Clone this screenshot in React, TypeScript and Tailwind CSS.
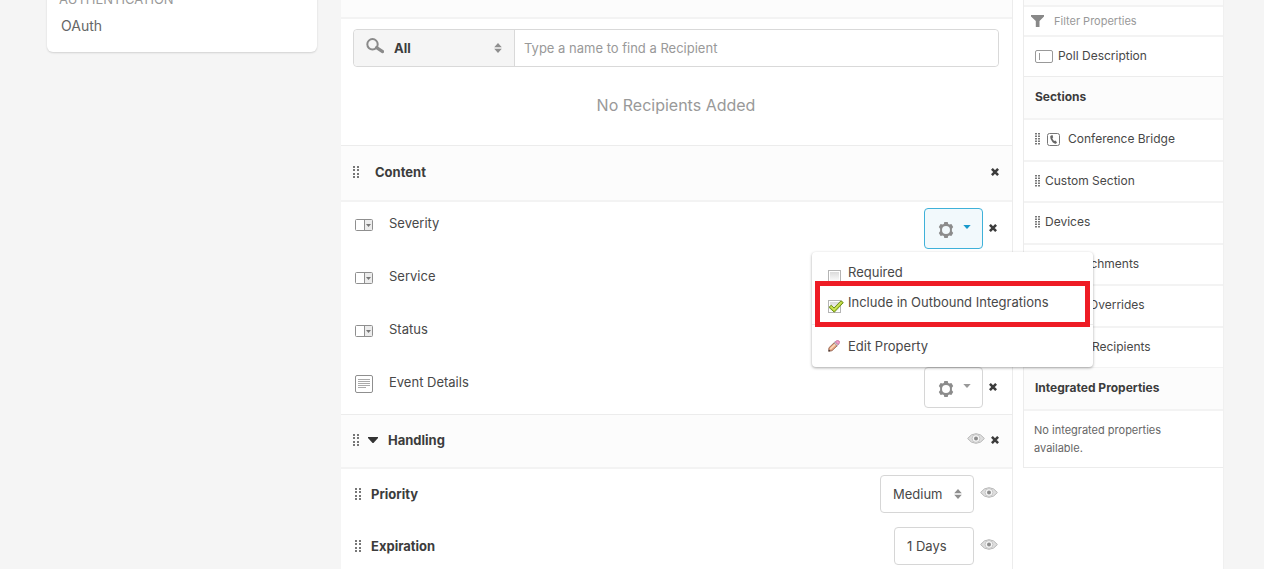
import { useState, type ReactNode } from "react";

function Grip() {
  return (
    <svg width="6" height="12" viewBox="0 0 6 12" className="shrink-0 fill-[#777]" aria-hidden="true">
      {[0, 4].map((x) =>
        [0, 3, 7, 10].map((y) => <rect key={`${x}-${y}`} x={x} y={y} width="2" height="2" />),
      )}
    </svg>
  );
}

function SmallGrip() {
  return (
    <svg width="5" height="12" viewBox="0 0 5 12" className="shrink-0 fill-[#777]" aria-hidden="true">
      {[0, 3].map((x) =>
        [0, 2.5, 5, 7.5, 10].map((y) => <rect key={`${x}-${y}`} x={x} y={y} width="2" height="1.5" />),
      )}
    </svg>
  );
}

function SearchIcon() {
  return (
    <svg width="18" height="16" viewBox="0 0 18 16" fill="none" stroke="#8a8a8a" aria-hidden="true">
      <circle cx="6.5" cy="6.3" r="5.2" strokeWidth="2" />
      <path d="M10.6 9.6 16.6 13.6" strokeWidth="3.2" strokeLinecap="round" />
    </svg>
  );
}

function Sorter({ className }: { className: string }) {
  return (
    <svg width="8" height="10" viewBox="0 0 8 10" className={`pointer-events-none absolute fill-[#8f8f8f] ${className}`} aria-hidden="true">
      <path d="M4 0 7.8 4.300H.2zM4 10 .2 5.700h7.600z" />
    </svg>
  );
}

function ListFieldIcon() {
  return (
    <svg width="18" height="12" viewBox="0 0 18 12" className="shrink-0" aria-hidden="true">
      <rect x=".5" y=".5" width="17" height="11" rx="1" fill="#fff" stroke="#8f8f8f" />
      <path d="M10 1h7v10h-7z" fill="#ececec" />
      <path d="M9.5 1v10" stroke="#8f8f8f" />
      <path d="M11 5h5l-2.5 3z" fill="#777" />
    </svg>
  );
}

function TextAreaIcon() {
  return (
    <svg width="18" height="18" viewBox="0 0 18 18" fill="none" stroke="#8f8f8f" className="shrink-0" aria-hidden="true">
      <rect x=".5" y=".5" width="17" height="17" rx="1.5" />
      <path d="M3 4.5h12M3 6.5h12M3 8.5h12M3 10.5h12M3 12.5h8" stroke="#aaa" />
    </svg>
  );
}

function TextFieldIcon() {
  return (
    <svg width="18" height="13" viewBox="0 0 18 13" fill="none" stroke="#999" className="shrink-0" aria-hidden="true">
      <rect x=".5" y=".5" width="17" height="12" rx="1.5" />
      <path d="M4.5 3v7" />
    </svg>
  );
}

function PhoneIcon() {
  return (
    <svg width="13" height="13" viewBox="0 0 13 13" className="shrink-0" aria-hidden="true">
      <rect x=".5" y=".5" width="12" height="12" rx="2" fill="#fff" stroke="#777" />
      <path d="M4 2.4 5.5 2 6.2 4.4 5.3 5.1Q5.8 6.9 7.2 8.1L8.3 7.5 10 9.2 9.2 10.6Q7.6 11.3 5.6 9.3 3 6.4 3.2 3.7 3.3 2.9 4 2.4z" fill="#666" />
    </svg>
  );
}

function ClipIcon() {
  return (
    <svg width="13" height="13" viewBox="0 0 13 13" fill="none" stroke="#777" className="shrink-0" aria-hidden="true">
      <path d="M9 4v5a2.5 2.5 0 0 1-5 0V3.5a1.5 1.5 0 0 1 3 0V9" />
    </svg>
  );
}

function FunnelIcon() {
  return (
    <svg width="13" height="12" viewBox="0 0 13 12" className="shrink-0 fill-[#888]" aria-hidden="true">
      <path d="M0 0h13v1.500L8.500 6v6H4.800V6L0 1.500z" />
    </svg>
  );
}

function GearIcon() {
  return (
    <svg width="16" height="16" viewBox="0 0 16 16" aria-hidden="true">
      <path
        fillRule="evenodd"
        fill="#8c8c8c"
        d="M6.300 0h3.400l.5 1.900 1.200.7 2-.5 1.800 2.900-1.300 1.700v2.600l1.300 1.700-1.800 2.900-2-.5-1.200.7-.5 1.900H6.300l-.5-1.900-1.200-.7-2 .5L.8 11l1.300-1.700V6.700L.8 5l1.800-2.900 2 .5 1.200-.7zM8 4a4 4 0 1 0 0 8 4 4 0 0 0 0-8z"
      />
    </svg>
  );
}

function CloseButton({ label }: { label: string }) {
  return (
    <button type="button" aria-label={label} className="block h-2 w-2 shrink-0 cursor-pointer">
      <svg width="8" height="8" viewBox="0 0 8 8" fill="none" stroke="#3c3c3c" strokeWidth="2.600" aria-hidden="true">
        <path d="M.9.9 7.100 7.100M7.100.9.9 7.100" />
      </svg>
    </button>
  );
}

function EyeButton({ label }: { label: string }) {
  return (
    <button type="button" aria-label={label} className="mb-1 block shrink-0 cursor-pointer">
      <svg width="18" height="11" viewBox="0 0 18 11" aria-hidden="true">
        <path d="M.6 5.500Q4 .7 9 .7t8.400 4.800Q14 10.300 9 10.300T.6 5.500z" fill="#dedede" stroke="#b8b8b8" />
        <circle cx="9" cy="5.500" r="3.900" fill="#f6f6f6" stroke="#bdbdbd" strokeWidth=".8" />
        <circle cx="9" cy="5.500" r="2" fill="#8c8c8c" />
      </svg>
    </button>
  );
}

function PencilIcon() {
  return (
    <svg width="12" height="12" viewBox="0 0 13 13" aria-hidden="true">
      <path d="M1 8.400 6.600 3 10 6.200 4.300 11.600.8 12.200z" fill="#eba882" stroke="#8a5a48" strokeWidth=".9" />
      <path d="M2.500 9.800 8 4.600" stroke="#fbdcc0" strokeWidth="1.300" />
      <path d="M6.600 3 7.800 1.900 11 5.100 10 6.200z" fill="#d8d8de" stroke="#8d8d98" strokeWidth=".6" />
      <path d="M7.800 1.900Q9.800-.4 11.900 1T11 5.100z" fill="#f29cc8" stroke="#b86890" strokeWidth=".8" />
      <path d="M.5 12.500.9 10.400 2.600 12z" fill="#333" />
    </svg>
  );
}

function CheckMark() {
  return (
    <svg width="16" height="13" viewBox="0 0 16 13" className="pointer-events-none absolute top-0 left-0" aria-hidden="true">
      <path d="M1 7.300 3.300 5.200 6 8 13 .8 15.300 2.600 6.300 12.200z" fill="#b5d334" stroke="#6f8f1c" strokeWidth="1" strokeLinejoin="round" />
      <path d="M3.200 6.700 6.100 9.700 13.200 2.300" fill="none" stroke="#dcec82" strokeWidth=".9" />
    </svg>
  );
}

function Option({ label, initial = false }: { label: string; initial?: boolean }) {
  const [on, setOn] = useState(initial);
  return (
    <label className="flex h-[30px] items-center gap-1 pl-4">
      <span className="relative mt-2 block h-[13px] w-4">
        <input
          type="checkbox"
          checked={on}
          onChange={() => setOn(!on)}
          className="block h-[13px] w-[13px] appearance-none border border-[#b4b4b4] bg-linear-to-b from-[#d8d8d8] to-white shadow-[inset_0_0_0_1px_#fff]"
        />
        {on && <CheckMark />}
      </span>
      {label}
    </label>
  );
}

function GearButton({ label, active = false }: { label: string; active?: boolean }) {
  return (
    <button
      type="button"
      aria-label={label}
      aria-expanded={active}
      className={
        active
          ? "flex h-[41px] w-[59px] items-center gap-[9px] rounded border border-[#3fb1d9] bg-[#f2f9fc] pt-[2px] pl-[13px] text-[#1899cb]"
          : "flex h-[41px] w-[59px] items-center gap-[9px] rounded border border-[#d6d6d6] bg-white pt-[2px] pl-[13px] text-[#999]"
      }
    >
      <GearIcon />
      <svg width="8" height="4" viewBox="0 0 8 4" className="-mt-[6px]" fill="currentColor" aria-hidden="true">
        <path d="M.3 0h7.400L4 4z" />
      </svg>
    </button>
  );
}

function PropertyRow({ name, icon, children }: { name: string; icon: ReactNode; children?: ReactNode }) {
  return (
    <div className="flex h-[53px] items-center justify-between pr-[15px] pl-[14px]">
      <div className="flex items-center gap-4 pb-2">
        <span className="block">{icon}</span>
        <span className="-mt-1">{name}</span>
      </div>
      {children}
    </div>
  );
}

function AsideItem({ name, icon }: { name: string; icon?: ReactNode }) {
  return (
    <li className="flex flex-1 items-center border-b-2 border-[#f3f3f3] pb-px pl-[11px] last:border-b">
      <SmallGrip />
      {icon ? <span className="mr-2 ml-[7px]">{icon}</span> : <span className="w-[5px]" />}
      {name}
    </li>
  );
}

const bar = "flex items-center justify-between bg-[#fcfcfc] border-[#f3f3f3] border-b-2";

export default function App() {
  return (
    <div className="flex h-screen items-stretch overflow-hidden bg-[#f5f5f5] pr-10 pl-[47px] font-[Inter,sans-serif] text-[13px] leading-5 text-[#484848]">
      <nav className="mr-6 w-[270px] shrink-0">
        <div className="rounded-b-md bg-white px-3 pb-4 shadow-[0_1px_2px_rgba(0,0,0,0.15)]">
          <h2 className="-mt-[11px] text-[13px] text-[#999]">AUTHENTICATION</h2>
          <a href="#oauth" className="mt-[7px] block pl-[2px] text-[14px] leading-5 text-[#666]">
            OAuth
          </a>
        </div>
      </nav>

      <main className="flex min-w-0 flex-1 bg-white">
        <div className="min-w-0 flex-1 border-r border-[#ececec]">
          <div className={`${bar} h-[19px]`} />

          <section className="h-[126px] pt-[10px] pr-[13px] pl-3">
            <div className="flex h-[38px] rounded border border-[#d9d9d9]">
              <div className="relative flex w-[161px] items-center rounded-l border-r border-[#d9d9d9] bg-[#f5f5f5]">
                <span className="pointer-events-none absolute left-3 -mt-1">
                  <SearchIcon />
                </span>
                <select aria-label="Recipient type" className="h-full w-full appearance-none pl-10 font-bold text-[#3c3c3c] outline-none">
                  <option>All</option>
                </select>
                <Sorter className="right-3" />
              </div>
              <input
                type="text"
                aria-label="Recipient name"
                placeholder="Type a name to find a Recipient"
                className="min-w-0 flex-1 rounded-r bg-white px-[9px] outline-none placeholder:text-[#999]"
              />
            </div>
            <p className="mt-7 text-center text-base leading-5 text-[#999]">No Recipients Added</p>
          </section>

          <section>
            <header className={`${bar} h-[57px] border-t border-t-[#ececec] pr-[13px] pb-[2px] pl-3`}>
              <div className="flex items-center gap-4">
                <Grip />
                <h3 className="font-bold text-[#3c3c3c]">Content</h3>
              </div>
              <CloseButton label="Remove Content" />
            </header>
            <PropertyRow name="Severity" icon={<ListFieldIcon />}>
              <div className="flex items-center gap-[6px]">
                <div className="relative">
                  <GearButton label="Severity options" active />
                  <div className="absolute top-11 -right-[110px] z-10 w-[281px] rounded bg-white pt-[5px] shadow-[0_1px_3px_rgba(0,0,0,0.35)]">
                    <Option label="Required" />
                    <Option label="Include in Outbound Integrations" initial />
                    <div className="mt-[7px] border-t border-[#ececec] pb-px">
                      <button type="button" className="flex h-[41px] w-full items-center gap-2 pl-4">
                        <PencilIcon />
                        Edit Property
                      </button>
                    </div>
                    <div className="pointer-events-none absolute top-[29px] right-[3px] left-[3px] h-[46px] border-[5px] border-[#ee1c25]" />
                  </div>
                </div>
                <div className="pb-[2px]">
                  <CloseButton label="Remove Severity" />
                </div>
              </div>
            </PropertyRow>
            <PropertyRow name="Service" icon={<ListFieldIcon />} />
            <PropertyRow name="Status" icon={<ListFieldIcon />} />
            <PropertyRow name="Event Details" icon={<TextAreaIcon />}>
              <div className="flex items-center gap-[6px]">
                <GearButton label="Event Details options" />
                <div className="pb-[2px]">
                  <CloseButton label="Remove Event Details" />
                </div>
              </div>
            </PropertyRow>
          </section>

          <section>
            <header className={`${bar} h-[55px] border-t border-t-[#ececec] pr-[13px] pb-[2px] pl-3`}>
              <div className="flex items-center">
                <Grip />
                <svg width="10" height="6" viewBox="0 0 10 6" className="mx-[9px] fill-[#333]" aria-hidden="true">
                  <path d="M0 0h10v1L5.500 6h-1L0 1z" />
                </svg>
                <h3 className="pl-px font-bold text-[#3c3c3c]">Handling</h3>
              </div>
              <div className="flex items-center gap-[6px]">
                <EyeButton label="Show Handling" />
                <CloseButton label="Remove Handling" />
              </div>
            </header>
            <div className="flex h-[52px] items-center justify-between pr-[14px] pb-[2px] pl-[14px]">
              <div className="flex items-center gap-[10px]">
                <Grip />
                <label htmlFor="priority" className="font-bold text-[#3c3c3c]">
                  Priority
                </label>
              </div>
              <div className="flex items-center gap-[6px]">
                <div className="relative flex items-center">
                  <select id="priority" className="h-[38px] w-[94px] appearance-none rounded border border-[#d6d6d6] bg-white pl-3 outline-none">
                    <option>Medium</option>
                  </select>
                  <Sorter className="right-3" />
                </div>
                <EyeButton label="Show Priority" />
              </div>
            </div>
            <div className="flex h-[52px] items-center justify-between pr-[14px] pb-[2px] pl-[14px]">
              <div className="flex items-center gap-[10px]">
                <Grip />
                <label htmlFor="expiration" className="font-bold text-[#3c3c3c]">
                  Expiration
                </label>
              </div>
              <div className="flex items-center gap-[6px]">
                <input
                  id="expiration"
                  type="text"
                  defaultValue="1 Days"
                  className="h-[38px] w-20 rounded border border-[#d6d6d6] bg-white px-3 outline-none"
                />
                <EyeButton label="Show Expiration" />
              </div>
            </div>
          </section>
        </div>

        <div className="w-[211px] shrink-0 border-r border-[#f0f0f0] pl-[10px]">
          <aside className="border-b border-l border-[#ececec] text-xs leading-5">
            <div className={`${bar} h-[7px]`} />
            <label className="flex h-[30px] items-center gap-[10px] rounded-t border-b-2 border-[#f3f3f3] pl-[7px]">
              <FunnelIcon />
              <input
                type="text"
                aria-label="Filter properties"
                placeholder="Filter Properties"
                className="w-full min-w-0 text-[11px] outline-none placeholder:text-[#999]"
              />
            </label>
            <div className="flex h-10 items-center gap-[5px] border-b border-[#ececec] pl-[11px]">
              <TextFieldIcon />
              <span className="pb-[2px]">Poll Description</span>
            </div>
            <h3 className={`${bar} h-[43px] pb-[2px] pl-[11px] font-bold text-[#3c3c3c]`}>Sections</h3>
            <ul className="flex h-[248px] flex-col">
              <AsideItem name="Conference Bridge" icon={<PhoneIcon />} />
              <AsideItem name="Custom Section" />
              <AsideItem name="Devices" />
              <AsideItem name="Attachments" icon={<ClipIcon />} />
              <AsideItem name="Sender Overrides" />
              <AsideItem name="Failsafe Recipients" />
            </ul>
            <h3 className={`${bar} h-[43px] pb-[2px] pl-[11px] font-bold text-[#3c3c3c]`}>Integrated Properties</h3>
            <p className="py-[10px] pr-10 pl-[10px] text-[11px] leading-[18px] text-[#666]">
              No integrated properties available.
            </p>
          </aside>
        </div>
      </main>
    </div>
  );
}
